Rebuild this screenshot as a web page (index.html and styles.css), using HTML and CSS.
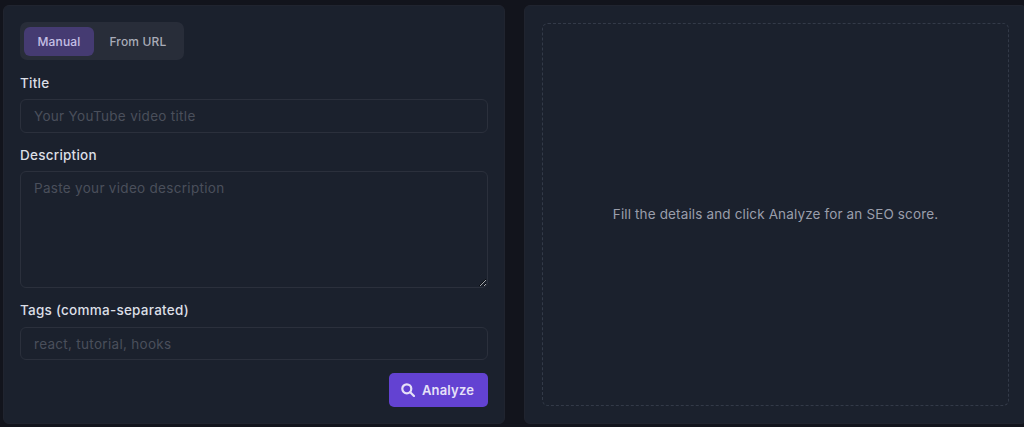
FILE: index.html
```html
<!DOCTYPE html>
<html lang="en">
<head>
  <meta charset="UTF-8" />
  <title>SEO Analyzer</title>
  <link rel="stylesheet" href="styles.css">
</head>
<body>
  <div class="layout">
    <form class="card form-card">
      <div class="tabs">
        <button type="button" class="tab active">Manual</button>
        <button type="button" class="tab">From URL</button>
      </div>
      <label class="field-label title-label" for="title">Title</label>
      <input class="field title-input" id="title" placeholder="Your YouTube video title" />
      <label class="field-label" for="description">Description</label>
      <textarea class="field desc-input" id="description" placeholder="Paste your video description"></textarea>
      <label class="field-label tags-label" for="tags">Tags (comma-separated)</label>
      <input class="field tags-input" id="tags" placeholder="react, tutorial, hooks" />
      <div class="actions">
        <button type="button" class="analyze">
          <svg width="14" height="14" viewBox="0 0 14 14" fill="none" stroke="currentColor" stroke-width="2.2" stroke-linecap="round">
            <circle cx="5.8" cy="5.8" r="4.5" />
            <path d="M9.2 9.2 L13 13" />
          </svg>
          Analyze
        </button>
      </div>
    </form>
    <section class="card result-card">
      <div class="empty">Fill the details and click Analyze for an SEO score.</div>
    </section>
  </div>
</body>
</html>
```

FILE: styles.css
```css
* {
  box-sizing: border-box;
}

html, body {
  margin: 0;
  padding: 0;
  height: 100%;
  background: #12141c;
  font-family: 'Inter', 'Noto Sans', sans-serif;
  overflow: hidden;
}

.layout {
  display: grid;
  grid-template-columns: 502px 503px;
  gap: 19px;
  height: 423px;
  padding: 5px 0 0 3px;
}

.card {
  background: #1b212d;
  border: 1px solid #20242f;
  border-radius: 6px;
  padding: 16px 16px;
}

.form-card {
  display: flex;
  flex-direction: column;
}

.tabs {
  display: flex;
  align-self: flex-start;
  gap: 2px;
  width: 164px;
  height: 38px;
  padding: 5px 4px 4px;
  background: #282d39;
  border-radius: 7px;
}

.tab {
  border: 0;
  border-radius: 6px;
  background: transparent;
  color: #a9acb8;
  font: 500 12px 'Inter', sans-serif;
  letter-spacing: 0.15px;
  white-space: nowrap;
  padding: 0 13.5px;
}

.tab.active {
  background: #453b72;
  color: #c5c0e6;
}

.field-label {
  display: block;
  color: #dcdfe6;
  font-size: 13.5px;
  font-weight: 500;
  letter-spacing: 0.25px;
  line-height: 16px;
  margin: 14px 0 8px;
}

.title-label {
  margin-top: 15px;
}

.tags-label {
  margin-bottom: 9px;
}

.field {
  display: block;
  width: 100%;
  background: #1b212d;
  border: 1px solid #2b303c;
  border-radius: 6px;
  padding: 0 13px;
  color: #dcdfe6;
  font: 400 13.5px 'Inter', sans-serif;
  letter-spacing: 0.3px;
  outline: none;
}

.field::placeholder {
  color: #4a4f5b;
  opacity: 1;
}

.title-input {
  height: 34px;
}

.desc-input {
  height: 117px;
  padding-top: 8px;
  resize: vertical;
}

.tags-input {
  height: 33px;
}

.actions {
  display: flex;
  justify-content: flex-end;
  margin-top: 13px;
}

.analyze {
  display: flex;
  align-items: center;
  justify-content: center;
  gap: 7px;
  width: 99px;
  height: 34px;
  border: 0;
  border-radius: 5px;
  padding: 0 2px 0 0;
  background: #6342d2;
  color: #e6e1f8;
  font: 600 13px 'Inter', sans-serif;
  letter-spacing: 0.2px;
}

.result-card {
  padding: 17px;
}

.empty {
  display: flex;
  align-items: center;
  justify-content: center;
  height: 383px;
  border: 1px dashed #333a48;
  border-radius: 6px;
  color: #9a9eab;
  font-size: 13.5px;
  letter-spacing: 0.14px;
  padding-bottom: 1px;
}
```
